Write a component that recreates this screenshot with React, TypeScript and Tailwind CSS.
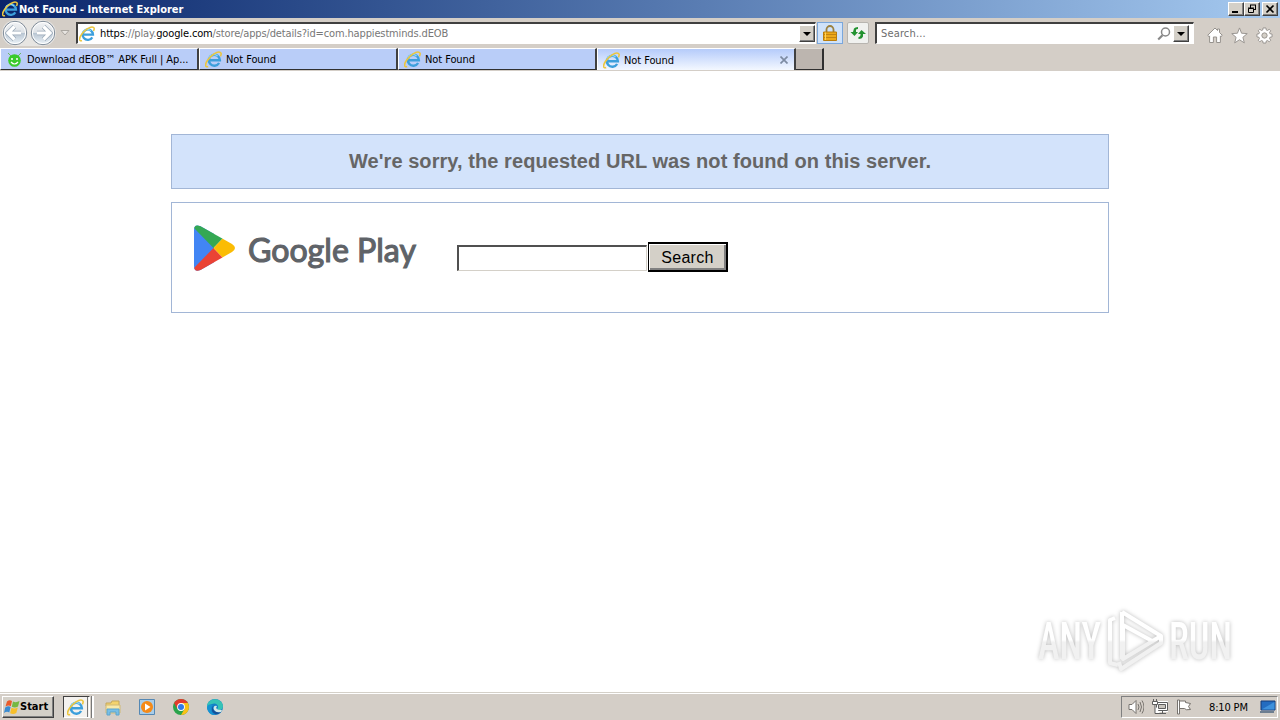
import type { ReactNode } from "react";

const raised =
  "border border-t-white border-l-white border-r-[#404040] border-b-[#404040] bg-[#d4d0c8] shadow-[inset_-1px_-1px_0_#808080]";

function IeIcon({ className = "h-4 w-4" }: { className?: string }) {
  return (
    <svg viewBox="0 0 16 16" className={`shrink-0 ${className}`} fill="none">
      <path d="M13.300 11.300A5.200 5.200 0 1 1 14 8.700H4.500" stroke="#3c9fdc" strokeWidth="2.300" />
      <path d="M3.600 6.800a5 5 0 0 1 8.300-2" stroke="#8ed8f8" strokeWidth="1.200" />
      <path
        d="M3 14.700C-.2 15.600-.1 12.300 2.400 8.700 5.600 4 11.700-.2 14.400 1.300c1.200.7.900 2.200.1 3.700"
        stroke="#ecc63e"
        strokeWidth="1.500"
      />
    </svg>
  );
}

function WindowButton({ children, className = "" }: { children: ReactNode; className?: string }) {
  return (
    <button className={`flex h-[14px] w-4 items-center justify-center ${raised} ${className}`}>
      <svg viewBox="0 0 12 10" className="h-[10px] w-3 shrink-0" fill="none" stroke="#000">
        {children}
      </svg>
    </button>
  );
}

function TitleBar() {
  return (
    <div className="flex h-[18px] items-center bg-linear-to-r from-[#0a246a] to-[#a6caf0] pl-[2px] pr-[2px]">
      <IeIcon />
      <span className="ml-px whitespace-nowrap pt-px text-[11px] font-bold leading-[17px] text-white">
        Not Found - Internet Explorer
      </span>
      <div className="ml-auto flex">
        <WindowButton>
          <path d="M2 8h6" strokeWidth="2" />
        </WindowButton>
        <WindowButton>
          <path d="M4.500 1v3M9.500 1v5M8 5.500h2" />
          <path d="M2.500 4.500h5v4h-5z" />
          <path d="M2 4h6M4 1h6" />
        </WindowButton>
        <WindowButton className="ml-[2px]">
          <path d="M2.500 1.500l7 7M9.500 1.500l-7 7" strokeWidth="1.700" />
        </WindowButton>
      </div>
    </div>
  );
}

function NavButton({ back = false }: { back?: boolean }) {
  return (
    <svg viewBox="0 0 26 26" className="h-[26px] w-[26px]">
      <defs>
        <linearGradient id="orb" x2="0" y2="1">
          <stop stopColor="#f3f4f6" />
          <stop offset=".48" stopColor="#dce1e6" />
          <stop offset=".52" stopColor="#b9c6d3" />
          <stop offset="1" stopColor="#eef5fa" />
        </linearGradient>
      </defs>
      <circle cx="13" cy="13" r="11.700" fill="url(#orb)" stroke="#7f8b98" />
      <circle cx="13" cy="13" r="10.600" fill="none" stroke="#fff" />
      <path
        d="M6 13h13M12.500 6.500L6 13l6.500 6.500"
        fill="none"
        stroke="#9ba9b8"
        strokeWidth="4.600"
        transform={back ? undefined : "rotate(180 13 13)"}
      />
      <path
        d="M6 13h13M12.500 6.500L6 13l6.500 6.500"
        fill="none"
        stroke="#fff"
        strokeWidth="3.200"
        transform={back ? undefined : "rotate(180 13 13)"}
      />
    </svg>
  );
}

function DropButton() {
  return (
    <button className={`flex h-[17px] w-4 shrink-0 items-center justify-center ${raised}`}>
      <svg viewBox="0 0 8 4" className="h-1 w-2">
        <path d="M0 0h8L4 4z" />
      </svg>
    </button>
  );
}

const field =
  "flex h-[22px] items-center border-t-2 border-l-2 border-r border-b border-t-[#404040] border-l-[#404040] border-r-white border-b-white bg-white";

function AddressBar() {
  return (
    <div className="flex h-[30px] items-center">
      <div className="ml-[2px] flex w-[54px] gap-[2px] rounded-full bg-[#e7e5e2]">
        <NavButton back />
        <NavButton />
      </div>
      <svg viewBox="0 0 10 6" className="ml-1 h-[6px] w-[10px]" fill="#e8e5e1" stroke="#aaa6a0">
        <path d="M1 .5h8L5 5z" />
      </svg>
      <div className={`ml-[6px] w-[740px] ${field}`}>
        <IeIcon className="ml-px h-4 w-4" />
        <span className="ml-[5px] whitespace-nowrap pt-[2px] text-[11px] tracking-[-0.14px] text-[#777]">
          <span className="text-black">https</span>://play.<span className="text-black">google.com</span>
          /store/apps/details?id=com.happiestminds.dEOB
        </span>
        <div className="ml-auto">
          <DropButton />
        </div>
      </div>
      <button className="ml-px flex h-[22px] w-[26px] items-center justify-center border border-[#7aa7dc] bg-[#cfe2fa]">
        <svg viewBox="0 0 14 16" className="h-4 w-[14px]">
          <path d="M3.500 8V4.500a3.500 3.500 0 0 1 7 0V8" fill="none" stroke="#9b8140" strokeWidth="1.800" />
          <path d="M.5 7h13v8.500H.5z" fill="#eda91a" stroke="#b97d0c" />
          <path d="M1 9.500h12M1 12.500h12" stroke="#c28412" />
          <path d="M2.500 7.500v7.500" stroke="#ffd45c" />
        </svg>
      </button>
      <button className="ml-1 flex h-[22px] w-[22px] items-center justify-center rounded-[2px] border border-[#b8b5b0] bg-[#f0f1ef]">
        <svg viewBox="0 0 16 14" className="h-[14px] w-4" fill="#239231">
          <path d="M4 2.500Q5 1 8 1v2Q6 3 6 4v2h2L4.500 10 .5 6H3z" />
          <path d="M13 10.500Q12 13 8.500 13v-2Q10.500 11 10.500 9V8H8l3.500-4L16 8h-3z" />
        </svg>
      </button>
      <div className={`ml-[6px] w-[319px] ${field}`}>
        <span className="ml-1 pt-[2px] text-[11px] tracking-[0.15px] text-[#6d6d6d]">Search...</span>
        <svg viewBox="0 0 14 14" className="ml-auto h-[14px] w-[14px]" fill="none" stroke="#888">
          <circle cx="8.500" cy="5" r="4" strokeWidth="1.500" />
          <path d="M5.500 8.200L1.200 12.500" strokeWidth="2.200" />
        </svg>
        <div className="ml-[2px] mr-1">
          <DropButton />
        </div>
      </div>
      <div className="ml-[13px] mt-1 flex items-center gap-2" aria-label="Tools">
        <svg viewBox="0 0 16 16" className="h-4 w-4" fill="#fff" stroke="#96928d">
          <path d="M.7 8.300L8 1l2.500 2.500V2h2v3.500l2.800 2.800-1.300 1.200-.6-.6v6.600H9.600V10H6.400v5.500H2.600V8.900L2 9.500z" />
        </svg>
        <svg viewBox="0 0 18 18" className="h-[17px] w-[17px]" fill="#fff" stroke="#96928d">
          <path d="M9 1l2.200 5.600 6 .4-4.600 3.900 1.500 5.900L9 13.500l-5.100 3.300 1.500-5.900L.8 7l6-.4z" />
        </svg>
        <svg viewBox="0 0 18 18" className="h-[17px] w-[17px]" fill="#fff" stroke="#96928d">
          <path d="M7.500 1h3l.4 2.200 1.200.5L14 2.400 15.600 4l-1.300 1.900.5 1.200 2.200.4v3l-2.200.4-.5 1.200 1.300 1.900-1.600 1.600-1.900-1.300-1.200.5-.4 2.200h-3l-.4-2.200-1.200-.5L4 15.600 2.400 14l1.300-1.900-.5-1.200L1 10.500v-3l2.200-.4.5-1.200L2.400 4 4 2.400l1.900 1.300 1.200-.5z" />
          <circle cx="9" cy="9" r="2.800" fill="#d4d0c8" />
        </svg>
      </div>
    </div>
  );
}

function Tab({ label, icon, active = false }: { label: string; icon?: ReactNode; active?: boolean }) {
  return (
    <div
      className={`flex h-[22px] w-[199px] shrink-0 items-center border-t border-l border-t-white border-l-white pl-[5px] ${
        active
          ? "border-r-2 border-r-[#404040] bg-linear-to-b from-[#b5cbfa] to-[#f4f8ff]"
          : "border-r-2 border-b border-r-[#404040] border-b-[#303030] bg-[#b9cdf8]"
      }`}
    >
      {icon ?? <IeIcon className="mt-px h-[17px] w-[17px]" />}
      <span className="ml-1 whitespace-nowrap pt-[3px] text-[11px] tracking-[-0.08px] text-black">{label}</span>
      {active && (
        <svg viewBox="0 0 8 8" className="ml-auto mr-[6px] h-2 w-2" stroke="#7d8ba2" strokeWidth="1.700">
          <path d="M.5.500l7 7M7.500.500l-7 7" />
        </svg>
      )}
    </div>
  );
}

function TabStrip() {
  return (
    <div className="flex h-[22px]">
      <Tab
        label="Download dEOB™ APK Full | Ap..."
        icon={
          <svg viewBox="0 0 17 16" className="mt-px h-4 w-[17px] shrink-0">
            <path d="M2 1l3 3M15 1l-3 3" stroke="#6cb765" />
            <circle cx="8.500" cy="8.500" r="6.300" fill="#3bcb2d" />
            <circle cx="6" cy="7" r="1" fill="#fff" />
            <circle cx="11" cy="7" r="1" fill="#fff" />
            <path d="M5 10q3.500 4 7 0" fill="none" stroke="#fff" strokeWidth="1.200" />
          </svg>
        }
      />
      <Tab label="Not Found" />
      <Tab label="Not Found" />
      <Tab label="Not Found" active />
      <div className="h-[22px] w-7 border-t border-r-2 border-b border-t-[#dedbd6] border-r-[#303030] border-b-[#303030] bg-[#bcb5af]" />
    </div>
  );
}

function GooglePlayLogo() {
  return (
    <svg viewBox="0 0 226 50" className="h-[50px] w-[226px] shrink-0 overflow-visible">
      <defs>
        <clipPath id="play">
          <path d="M1 7Q1 .5 7.500 3.200L39 21Q45 25 39 29L7.500 47Q1 49.500 1 43z" />
        </clipPath>
      </defs>
      <g clipPath="url(#play)">
        <path d="M0 0h21v50H0z" fill="#4285f4" />
        <path d="M0 4L20.500 25 33 12V0H0z" fill="#34a853" />
        <path d="M0 46l20.500-21L33 38v12H0z" fill="#ea4335" />
        <path d="M20.500 25L32 13h15v24H32z" fill="#fbbc04" />
      </g>
      <text
        x="55"
        y="38.500"
        textLength="168"
        lengthAdjust="spacingAndGlyphs"
        fontFamily="Lato, sans-serif"
        fontSize="33.500"
        fill="#5f6368"
        stroke="#5f6368"
        strokeWidth="1.200"
      >
        Google Play
      </text>
    </svg>
  );
}

function Watermark() {
  const letters = {
    y: 659,
    textLength: 63,
    lengthAdjust: "spacingAndGlyphs" as const,
    fontFamily: "Roboto, sans-serif",
    fontSize: 51,
    fontWeight: 500,
  };
  return (
    <svg
      viewBox="1030 600 210 80"
      className="absolute right-10 bottom-3 h-20 w-[210px] overflow-visible drop-shadow-[0_0_2px_#bbbbbb]"
      fill="url(#glass)"
    >
      <defs>
        <linearGradient id="glass" gradientUnits="userSpaceOnUse" x1="0" x2="0" y1="610" y2="672">
          <stop offset=".48" stopColor="#fff" />
          <stop offset=".52" stopColor="#f1f1f1" />
        </linearGradient>
      </defs>
      <text x="1038" {...letters}>ANY</text>
      <text x="1169" {...letters}>RUN</text>
      <g fill="none" stroke="url(#glass)" strokeWidth="4" strokeLinejoin="round">
        <path d="M1115 618l-5 2v43l8 2" />
        <path d="M1122 612l39 24-38 23v-34l31 17M1122 612v47" />
        <path d="M1161 636v7l-40 26-2-7" />
      </g>
    </svg>
  );
}

function Taskbar() {
  return (
    <div className="flex h-[28px] items-center border-t border-[#d4d0c8] bg-[#d4cec7] shadow-[inset_0_1px_0_#fff]">
      <button className={`ml-[2px] mt-px flex h-[22px] w-[52px] items-center pl-px ${raised}`}>
        <svg viewBox="0 0 16 16" className="h-4 w-4 shrink-0">
          <path d="M3 2.500q2.500-2 5-.5L6.800 7.200Q4.500 5.800 1.500 7.500z" fill="#e85b2b" />
          <path d="M9 2.500q3 1.500 6.500-.5L14 7.500q-3 1.800-6.200.2z" fill="#75b843" />
          <path d="M1.200 8.500q3-2 5.400-.5L5.300 13.500q-2.500-1.500-5.300.5z" fill="#398bd1" />
          <path d="M7.500 8.700q3 1.500 6.300-.2L12.300 14q-3 1.800-6.200.2z" fill="#f7bf2b" />
        </svg>
        <span className="pt-px text-[11px] font-bold text-black">Start</span>
      </button>
      <div className="ml-[9px] mt-px flex h-[22px] w-[27px] items-center border border-t-[#404040] border-l-[#404040] border-r-white border-b-white bg-[#f4f2ef] pl-[3px]">
        <IeIcon className="h-[17px] w-[17px]" />
        <div className="ml-[3px] h-5 w-px bg-[#777]" />
      </div>
      <div className="ml-px mt-px h-[22px] w-px bg-[#777]" />
      <div className="mt-px h-[22px] w-[2px] bg-white" />
      <svg viewBox="0 0 16 16" className="ml-[11px] mt-[3px] h-4 w-4">
        <path d="M1 3h5l1-2h7v5H1z" fill="#f4d36d" stroke="#c4a75c" />
        <path d="M1 5h14v8H1z" fill="#f9e9a8" stroke="#d0b976" />
        <path d="M2 15V9h12v6h-3v-3H5v3z" fill="#78bfe6" stroke="#5ca4cd" />
      </svg>
      <svg viewBox="0 0 16 16" className="ml-[18px] mt-px h-4 w-4">
        <path d="M.5.500h15v15H.5z" fill="#a9cde9" stroke="#5588b4" />
        <circle cx="8" cy="8" r="6" fill="#f58a18" />
        <path d="M6 4.500v7L11.500 8z" fill="#fff" />
      </svg>
      <svg viewBox="0 0 16 16" className="ml-[18px] mt-px h-4 w-4">
        <circle cx="8" cy="8" r="8" fill="#29a34b" />
        <path d="M1.100 4A8 8 0 0 1 14.900 4H8L4.500 10z" fill="#e33b2d" />
        <path d="M14.900 4A8 8 0 0 1 8 16l3.500-6L8 4z" fill="#fbc116" />
        <circle cx="8" cy="8" r="3.900" fill="#fff" />
        <circle cx="8" cy="8" r="3" fill="#327be8" />
      </svg>
      <svg viewBox="0 0 16 16" className="ml-[18px] mt-px h-4 w-4">
        <circle cx="8" cy="8" r="8" fill="#147fc6" />
        <path d="M0 7C1-2 15-2 16 7c0 4-4 5-6 3 3-3-1-7-5-5Q1 6 0 10z" fill="#36c3b6" />
        <path d="M6 6c-4 4-1 9 3 10Q2 17 0 9q0-5 6-3z" fill="#1593d2" />
        <path d="M6 7q-1 7 8 6-3 3-6 2-5-3-2-8z" fill="#14519a" />
        <path d="M10 7q-3 4 5 4l-1 2Q7 14 6.500 9 7 6 10 7z" fill="#d4e8e8" />
      </svg>
      <div className="ml-auto mr-[2px] mt-px flex h-[22px] w-[157px] items-center border border-t-[#808080] border-l-[#808080] border-r-white border-b-white pl-[6px]">
        <svg viewBox="0 0 16 16" className="h-4 w-4 shrink-0" fill="#fff" stroke="#77736e">
          <path d="M1 5.500h3l4-4v13l-4-4H1z" />
          <path d="M10 5q2 3 0 6M12 3q3 5 0 10M14 1.500q4 6.500 0 13" fill="none" />
        </svg>
        <svg viewBox="0 0 16 16" className="ml-2 h-4 w-4 shrink-0" fill="none" stroke="#5d5d5d">
          <path d="M4.500 3.500h11v8h-11z" fill="#d4d0c8" stroke="#fff" strokeWidth="3" />
          <path d="M4.500 3.500h11v8h-11z" fill="#fff" />
          <path d="M6.500 5.500h7v4h-7z" fill="#c9c5be" />
          <path d="M10.500 12v2M7 14.500h7" />
          <path d="M.5 2.500h5v3h-5zM1.500 0v2M4.500 0v2M3 6v8.500h5" fill="#fff" />
        </svg>
        <svg viewBox="0 0 16 16" className="ml-2 h-4 w-4 shrink-0" fill="#fff" stroke="#77736e">
          <path d="M1.500 1h2v14h-2zM3.500 2h6v1.500l5 1-2 3 2 3q-5 1-6-1h-5z" />
        </svg>
        <span className="ml-[17px] whitespace-nowrap pt-[2px] text-[11px] tracking-[-0.15px] text-black">8:10 PM</span>
        <svg viewBox="0 0 16 14" className="ml-auto mr-px h-[14px] w-4 shrink-0">
          <path d="M1 1h14v9H1z" fill="#236cc0" stroke="#153b76" />
          <path d="M1.500 9.500L14.500 2v7.500z" fill="#3e91dc" />
          <path d="M0 12h14" stroke="#6d7e90" strokeWidth="2" />
        </svg>
      </div>
    </div>
  );
}

export default function App() {
  return (
    <div className="flex h-[720px] w-[1280px] flex-col overflow-hidden bg-white font-['DejaVu_Sans_Condensed','DejaVu_Sans',sans-serif] [font-stretch:condensed]">
      <header className="h-[71px] shrink-0 bg-[#d4cec7]">
        <TitleBar />
        <AddressBar />
        <TabStrip />
      </header>

      <main className="relative flex-1 px-[171px] pt-[63px] font-['Liberation_Sans',Arial,sans-serif]">
        <div className="flex h-[55px] items-center justify-center border border-[#a2b6d6] bg-[#d3e3fb] text-xl font-bold text-[#666]">
          <span className="-mt-px whitespace-nowrap tracking-[0.065px]">
            We're sorry, the requested URL was not found on this server.
          </span>
        </div>
        <div className="mt-[13px] flex h-[111px] items-start border border-[#a2b6d6] pt-5 pl-[21px]">
          <GooglePlayLogo />
          <input
            aria-label="Search Google Play"
            className="mt-[22px] ml-[38px] h-[26px] w-[190px] border-t-2 border-r border-b border-l-2 border-t-[#505050] border-r-[#d4d0c8] border-b-[#d4d0c8] border-l-[#505050] px-1 outline-none"
          />
          <button className="mt-[19px] ml-px h-[30px] w-20 border-t-2 border-r-2 border-b-2 border-l border-black bg-[#d4d0c8] pt-[2px] text-base tracking-[0.3px] text-black shadow-[inset_1px_1px_0_#fff,inset_-2px_-2px_0_#808080]">
            Search
          </button>
        </div>
        <Watermark />
      </main>

      <Taskbar />
    </div>
  );
}
